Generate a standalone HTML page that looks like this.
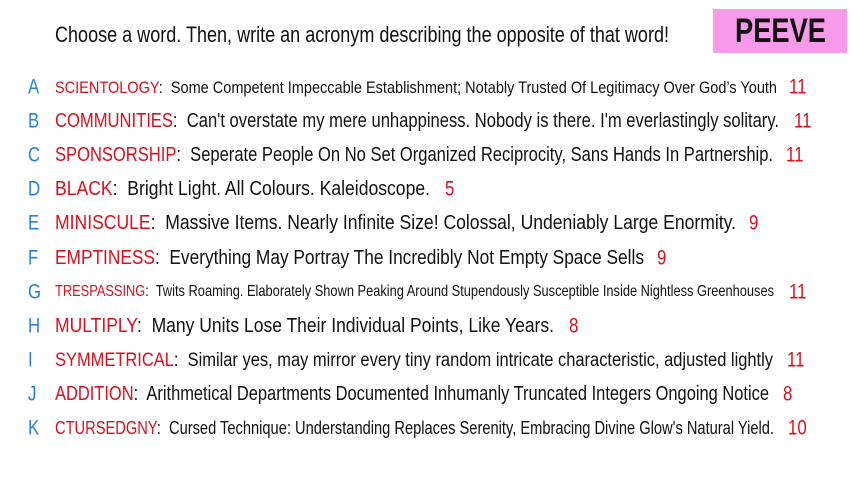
<!DOCTYPE html>
<html><head><meta charset="utf-8"><style>
html,body{margin:0;padding:0;width:853px;height:480px;background:#fff;overflow:hidden}
body{position:relative;font-family:"Liberation Sans Narrow","Liberation Sans",sans-serif;color:#111}
.t{position:absolute;white-space:nowrap;transform-origin:0 50%;line-height:1}
.L{position:absolute;left:28px;color:#2b7fd8;font-size:21px;line-height:1;transform:translateY(-50%) scaleX(0.8);transform-origin:0 50%}
.r{color:#d8111f}
.n{position:absolute;color:#d8111f;font-size:21px;line-height:1;transform:translateY(-50%) scaleX(0.8);transform-origin:0 50%}
#peeve{position:absolute;left:713px;top:9px;width:134px;height:44px;background:#f69ae9}
#peeve span{position:absolute;left:22px;top:5px;font-weight:bold;font-size:34px;line-height:1;color:#111;transform-origin:0 0}
</style></head><body>
<div class="t" id="title" data-x="55" data-y="35" data-w="614" style="font-size:22px">Choose a word. Then, write an acronym describing the opposite of that word!</div>
<div id="peeve"><span id="pv">PEEVE</span></div>

<div class="L" style="top:87px">A</div><div class="t" data-x="55" data-y="87" data-w="722" style="font-size:17px"><span class="r">SCIENTOLOGY</span>:&nbsp; Some Competent Impeccable Establishment; Notably Trusted Of Legitimacy Over God’s Youth</div><div class="n" style="left:789px;top:87px">11</div>
<div class="L" style="top:121px">B</div><div class="t" data-x="55" data-y="121" data-w="724" style="font-size:20px"><span class="r">COMMUNITIES</span>:&nbsp; Can't overstate my mere unhappiness. Nobody is there. I'm everlastingly solitary.</div><div class="n" style="left:794px;top:121px">11</div>
<div class="L" style="top:155px">C</div><div class="t" data-x="55" data-y="155" data-w="718" style="font-size:20px"><span class="r">SPONSORSHIP</span>:&nbsp; Seperate People On No Set Organized Reciprocity, Sans Hands In Partnership.</div><div class="n" style="left:786px;top:155px">11</div>
<div class="L" style="top:189px">D</div><div class="t" data-x="55" data-y="189" data-w="375" style="font-size:20px"><span class="r">BLACK</span>:&nbsp; Bright Light. All Colours. Kaleidoscope.</div><div class="n" style="left:445px;top:189px">5</div>
<div class="L" style="top:223px">E</div><div class="t" data-x="55" data-y="223" data-w="681" style="font-size:20px"><span class="r">MINISCULE</span>:&nbsp; Massive Items. Nearly Infinite Size! Colossal, Undeniably Large Enormity.</div><div class="n" style="left:749px;top:223px">9</div>
<div class="L" style="top:258px">F</div><div class="t" data-x="55" data-y="258" data-w="589" style="font-size:20px"><span class="r">EMPTINESS</span>:&nbsp; Everything May Portray The Incredibly Not Empty Space Sells</div><div class="n" style="left:657px;top:258px">9</div>
<div class="L" style="top:292px">G</div><div class="t" data-x="55" data-y="292" data-w="719" style="font-size:16px"><span class="r">TRESPASSING</span>:&nbsp; Twits Roaming. Elaborately Shown Peaking Around Stupendously Susceptible Inside Nightless Greenhouses</div><div class="n" style="left:789px;top:292px">11</div>
<div class="L" style="top:326px">H</div><div class="t" data-x="55" data-y="326" data-w="499" style="font-size:20px"><span class="r">MULTIPLY</span>:&nbsp; Many Units Lose Their Individual Points, Like Years.</div><div class="n" style="left:569px;top:326px">8</div>
<div class="L" style="top:360px">I</div><div class="t" data-x="55" data-y="360" data-w="718" style="font-size:19px"><span class="r">SYMMETRICAL</span>:&nbsp; Similar yes, may mirror every tiny random intricate characteristic, adjusted lightly</div><div class="n" style="left:787px;top:360px">11</div>
<div class="L" style="top:394px">J</div><div class="t" data-x="55" data-y="394" data-w="714" style="font-size:20px"><span class="r">ADDITION</span>:&nbsp; Arithmetical Departments Documented Inhumanly Truncated Integers Ongoing Notice</div><div class="n" style="left:783px;top:394px">8</div>
<div class="L" style="top:428px">K</div><div class="t" data-x="55" data-y="428" data-w="719" style="font-size:18px"><span class="r">CTURSEDGNY</span>:&nbsp; Cursed Technique: Understanding Replaces Serenity, Embracing Divine Glow's Natural Yield.</div><div class="n" style="left:788px;top:428px">10</div>
<script>
document.querySelectorAll('.t').forEach(function(e){
  var x=+e.dataset.x,y=+e.dataset.y,w=+e.dataset.w;
  var r=e.getBoundingClientRect();
  e.style.left=x+'px';
  e.style.top=(y-r.height/2)+'px';
  e.style.transform='scaleX('+(w/r.width)+')';
});
var p=document.getElementById('pv');var pr=p.getBoundingClientRect();
p.style.transform='scaleX('+(91/pr.width)+')';
</script>
</body></html>
